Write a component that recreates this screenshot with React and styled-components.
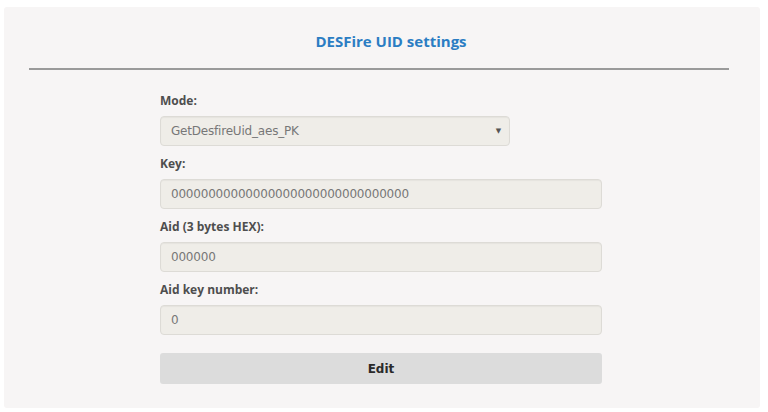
import styled, {createGlobalStyle} from "styled-components";

const GlobalStyle = createGlobalStyle`
    body {
        margin: 0;
        background: #ffffff;
        font-family: "Open Sans", "Liberation Sans", sans-serif;
    }
`;

const Page = styled.div`
    padding: 7px 8px 4px 4px;
    height: 412px;
    box-sizing: border-box;
`;

const Panel = styled.section`
    background: #f7f5f5;
    height: 100%;
    box-sizing: border-box;
    padding: 24px 31px 0 25px;
    border-radius: 3px;
`;

const Title = styled.h2`
    margin: 0;
    padding-left: 24px;
    text-align: center;
    font-size: 15px;
    line-height: 20px;
    font-weight: 700;
    color: #2b7dc3;
`;

const Divider = styled.hr`
    margin: 17px 0 23px;
    border: none;
    height: 2px;
    background: #9a9a9a;
`;

const Form = styled.form`
    width: 442px;
    margin: 0 0 0 131px;
    display: flex;
    flex-direction: column;
`;

const Label = styled.label`
    font-size: 12px;
    line-height: 16px;
    font-weight: 700;
    color: #4e4e4e;
    margin-bottom: 7px;
`;

const Field = styled.div`
    width: ${(p) => p.width || "100%"};
    height: 30px;
    box-sizing: border-box;
    display: flex;
    align-items: center;
    justify-content: space-between;
    padding: 0 8px 0 10px;
    background: #efede8;
    border: 1px solid #dddbd6;
    border-radius: 4px;
    box-shadow: inset 0 1px 1px rgba(0, 0, 0, 0.04);
    font-family: "DejaVu Sans", Verdana, sans-serif;
    font-size: 12px;
    letter-spacing: -0.2px;
    color: #777;
    margin-bottom: 10px;
`;

const Caret = styled.span`
    font-size: 7px;
    color: #555;
`;

const Button = styled.button`
    margin-top: 8px;
    height: 31px;
    width: 100%;
    border: none;
    border-radius: 3px;
    background: #dcdcdc;
    font-family: "DejaVu Sans", Verdana, sans-serif;
    font-weight: 700;
    font-size: 12px;
    color: #2a2a2a;
`;

export default function App() {
    return (
        <>
            <GlobalStyle/>
            <Page>
                <Panel>
                    <Title>DESFire UID settings</Title>
                    <Divider/>
                    <Form>
                        <Label>Mode:</Label>
                        <Field width="350px">
                            GetDesfireUid_aes_PK
                            <Caret>▼</Caret>
                        </Field>
                        <Label>Key:</Label>
                        <Field>00000000000000000000000000000000</Field>
                        <Label>Aid (3 bytes HEX):</Label>
                        <Field>000000</Field>
                        <Label>Aid key number:</Label>
                        <Field>0</Field>
                        <Button type="button">Edit</Button>
                    </Form>
                </Panel>
            </Page>
        </>
    );
}
